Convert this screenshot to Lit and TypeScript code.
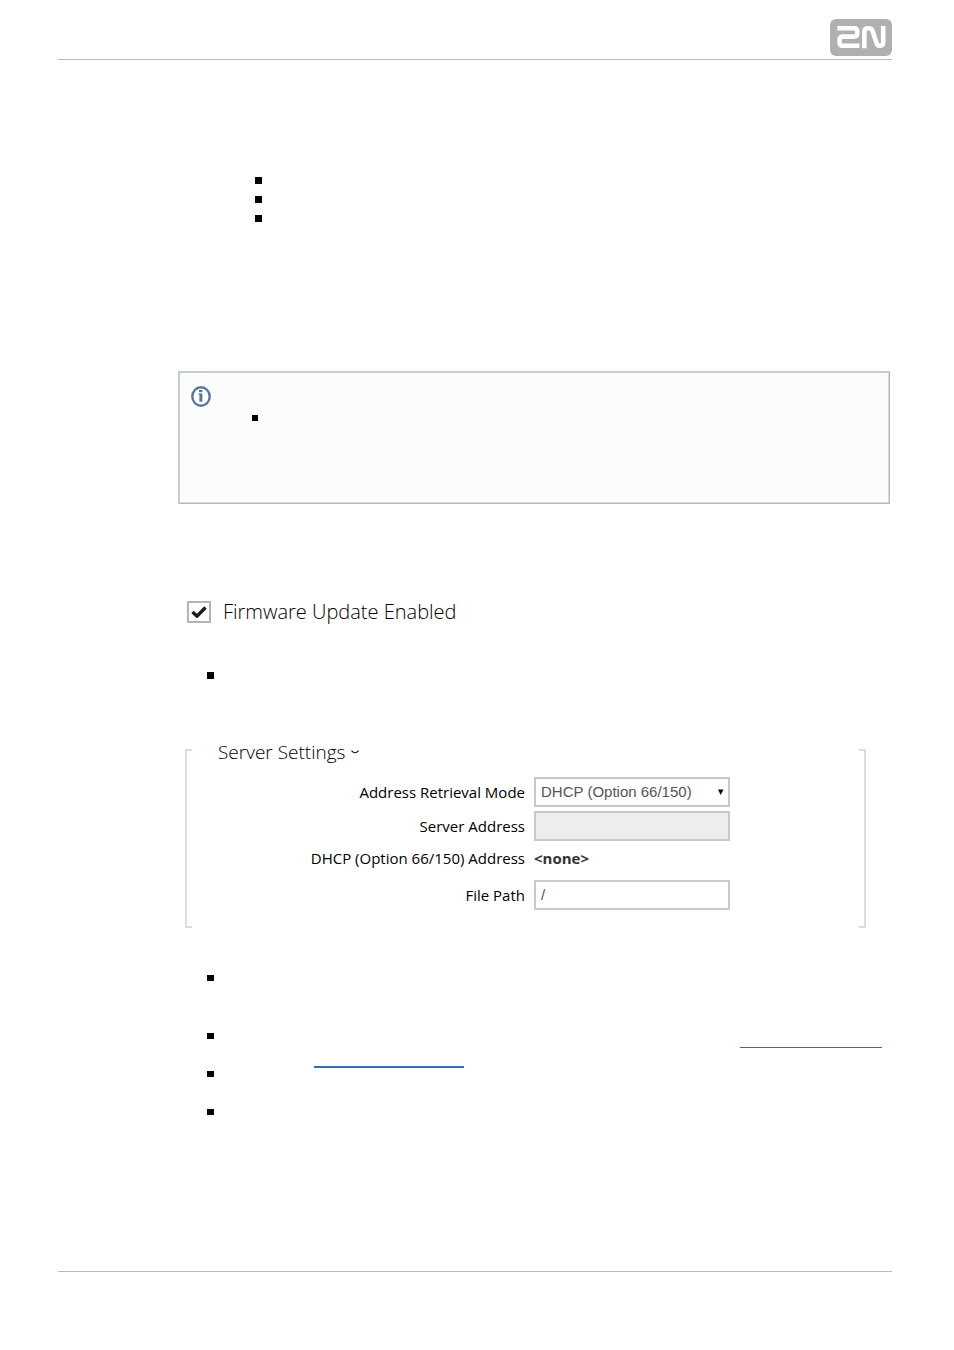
import { LitElement, html, css } from "lit";
import { customElement, state } from "lit/decorators.js";

@customElement("brand-logo")
class BrandLogo extends LitElement {
  static styles = css`
    :host { display: block; }
    svg { display: block; width: 62px; height: 37px; }
  `;
  render() {
    return html`
      <svg viewBox="0 0 62 37" role="img" aria-label="2N">
        <rect width="62" height="37" rx="6" fill="#b0b0b0" />
        <g fill="none" stroke="#fff" stroke-width="4.6" stroke-linejoin="round" stroke-linecap="butt">
          <path d="M7.5 9.2H24Q27.2 9.2 27.2 12.2V14.6Q27.2 17.6 24 17.6H13Q9.6 17.6 9.6 20.8V23.6Q9.6 26.8 13 26.8H29.5" />
          <path d="M34.4 29.2V12.6Q34.4 9.2 37.8 9.2H39Q41.6 9.2 42.5 11.8L46.6 24.2Q47.5 26.8 49.8 26.8Q53.2 26.8 53.2 23.4V7" />
        </g>
      </svg>
    `;
  }
}

@customElement("info-note")
class InfoNote extends LitElement {
  static styles = css`
    :host {
      display: block;
      box-sizing: border-box;
      min-height: 133px;
      padding: 13px 11px;
      background: #fcfcfc;
      border: 2px solid #c3ced9;
      border-right: 1px solid #adb8c2;
      border-bottom: 1px solid #adb8c2;
      box-shadow: inset -1px -1px #d5dde4;
    }
    .icon { display: block; width: 20px; height: 21px; }
  `;
  render() {
    return html`
      <svg class="icon" viewBox="0 0 20 21" aria-hidden="true">
        <ellipse cx="10" cy="10.5" rx="8.7" ry="9.2" fill="#fff" stroke="#56779b" stroke-width="2.4" />
        <rect x="8" y="4" width="3.4" height="2.2" fill="#56779b" />
        <path d="M7.2 7.4H11.4V15.8H8.4V8.4H7.2Z" fill="#56779b" />
      </svg>
      <slot></slot>
    `;
  }
}

@customElement("server-settings")
class ServerSettings extends LitElement {
  @state() private open = true;

  static styles = css`
    :host { display: flex; }
    .bracket {
      flex: none;
      box-sizing: border-box;
      width: 7px;
      margin-top: 9px;
      border: 2px solid #ddd;
    }
    .left { border-right: 0; }
    .right { border-left: 0; }
    .body { flex: 1; min-height: 188px; box-sizing: border-box; }
    .title { margin: 0; padding-left: 26px; font-size: 19px; line-height: 24px; font-weight: 300; }
    .toggle {
      display: flex;
      align-items: center;
      gap: 6px;
      padding: 0;
      border: 0;
      background: none;
      color: #000;
      font: inherit;
      cursor: pointer;
    }
    .chevron { width: 8px; height: 4px; }
    .form {
      display: grid;
      grid-template-columns: 1fr 1fr;
      column-gap: 9px;
      row-gap: 4px;
      padding: 13px 0 0 8px;
      align-items: center;
      font-size: 15px;
    }
    .label { text-align: right; line-height: 30px; }
    .control, .field {
      box-sizing: border-box;
      width: 196px;
      height: 30px;
    }
    .control {
      margin: 0;
      padding: 0 5px 2px;
      border: 2px solid #c8c8c8;
      border-radius: 0;
      background: #fff;
      color: #555;
      font: 15px "Liberation Sans", Arial, sans-serif;
      appearance: none;
      opacity: 1;
    }
    .control:disabled { background: #ededed; }
    .field { display: grid; grid-template-columns: 1fr 12px; align-items: center; }
    .field .control { grid-area: 1 / 1 / 2 / 3; }
    .arrow { grid-area: 1 / 2; width: 6px; height: 6px; pointer-events: none; z-index: 1; }
    .value { color: #333; font-weight: 700; }
    .value, .short { line-height: 26px; }
    .gap { grid-column: 1 / 3; height: 1px; }
  `;

  render() {
    return html`
      <div class="bracket left"></div>
      <div class="body">
        <h2 class="title">
          <button class="toggle" type="button" aria-expanded=${this.open} @click=${() => (this.open = !this.open)}>
            Server Settings
            <svg class="chevron" viewBox="0 0 8 4" aria-hidden="true">
              <path d="M.5 .7Q4 4.8 7.5 .7" fill="none" stroke="#111" stroke-width="1.2" />
            </svg>
          </button>
        </h2>
        ${this.open
          ? html`
              <form class="form">
                <label class="label" for="mode">Address Retrieval Mode</label>
                <div class="field">
                  <select class="control" id="mode">
                    <option>DHCP (Option 66/150)</option>
                  </select>
                  <svg class="arrow" viewBox="0 0 6 6" aria-hidden="true"><path d="M0 .5H5.4L2.7 6Z" /></svg>
                </div>
                <label class="label" for="server">Server Address</label>
                <input class="control" id="server" type="text" disabled />
                <label class="label short" for="dhcp">DHCP (Option 66/150) Address</label>
                <output class="value" id="dhcp">&lt;none&gt;</output>
                <div class="gap"></div>
                <label class="label" for="path">File Path</label>
                <input class="control" id="path" type="text" value="/" />
              </form>
            `
          : null}
      </div>
      <div class="bracket right"></div>
    `;
  }
}

@customElement("app-root")
class AppRoot extends LitElement {
  static styles = css`
    :host {
      display: block;
      background: #fff;
      color: #000;
      font-family: "Open Sans", "Noto Sans", sans-serif;
    }
    .page {
      box-sizing: border-box;
      min-height: 100vh;
      display: flex;
      flex-direction: column;
      padding: 19px 62px 78px 58px;
    }
    .header {
      display: flex;
      justify-content: flex-end;
      padding-bottom: 3px;
      border-bottom: 1px solid #bbb;
    }
    .footer { margin-top: auto; border-top: 1px solid #bbb; }
    .content { padding: 111px 2px 0 120px; }
    .list { list-style: none; margin: 0; padding: 0; }
    .item { display: flex; align-items: center; min-height: 19px; }
    .item::before { content: ""; flex: none; width: 7px; height: 7px; background: #000; }
    .modes { padding-left: 77px; margin-bottom: 143px; }
    .noted { padding-left: 61px; margin-top: 1px; }
    .noted .item::before { width: 6px; height: 6px; }
    .enable {
      display: flex;
      align-items: center;
      gap: 12px;
      margin: 94px 0 0 9px;
      font-size: 20px;
      line-height: 28px;
      font-weight: 300;
    }
    .box { display: grid; place-items: center; width: 24px; height: 22px; }
    .check {
      grid-area: 1 / 1;
      box-sizing: border-box;
      width: 100%;
      height: 100%;
      margin: 0;
      border: 2px solid #b4b4b4;
      background: #fff;
      appearance: none;
    }
    .tick { grid-area: 1 / 1; width: 16px; height: 12px; pointer-events: none; visibility: hidden; z-index: 1; }
    .check:checked + .tick { visibility: visible; }
    .params { padding-left: 29px; }
    .update { margin: 40px 0 55px; }
    .settings { margin: 0 24px 0 7px; }
    .details { margin-top: 40px; }
    .details .item { align-items: flex-start; min-height: 38px; }
    .details .tall { min-height: 58px; }
    .details .item::before { height: 6px; margin-top: 7px; }
    .refs { flex: 1; display: flex; flex-direction: column; padding: 21px 8px 0 100px; }
    .ref { display: block; height: 2px; margin-bottom: -6px; background: #306fac; }
    .first { width: 142px; height: 1px; align-self: flex-end; }
    .second { width: 150px; margin-top: 24px; }
  `;

  render() {
    return html`
      <div class="page">
        <header class="header"><brand-logo></brand-logo></header>
        <main class="content">
          <ul class="list modes">
            <li class="item"></li>
            <li class="item"></li>
            <li class="item"></li>
          </ul>
          <info-note>
            <ul class="list noted">
              <li class="item"></li>
            </ul>
          </info-note>
          <label class="enable">
            <span class="box">
              <input class="check" type="checkbox" checked />
              <svg class="tick" viewBox="0 0 16 12" aria-hidden="true">
                <path d="M1.5 6L6 10.2L14.5 1.5" fill="none" stroke="#1c1c1c" stroke-width="3.4" />
              </svg>
            </span>
            Firmware Update Enabled
          </label>
          <ul class="list params update">
            <li class="item"></li>
          </ul>
          <server-settings class="settings"></server-settings>
          <ul class="list params details">
            <li class="item tall"></li>
            <li class="item">
              <div class="refs">
                <a class="ref first" href="#dhcp-options" aria-label="DHCP options"></a>
                <a class="ref second" href="#file-path" aria-label="File path"></a>
              </div>
            </li>
            <li class="item"></li>
            <li class="item"></li>
          </ul>
        </main>
        <footer class="footer"></footer>
      </div>
    `;
  }
}
